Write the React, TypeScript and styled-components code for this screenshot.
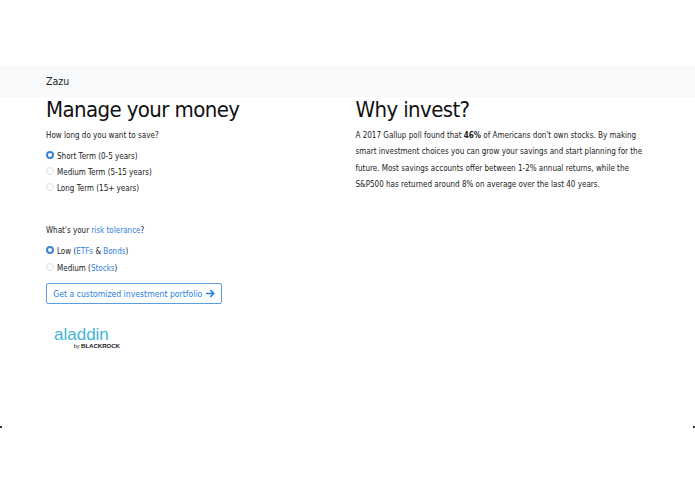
import React from "react";
import styled, { createGlobalStyle } from "styled-components";

const Global = createGlobalStyle`
  html, body { margin: 0; padding: 0; background: #fff; }
  body { font-family: "DejaVu Sans", sans-serif; font-stretch: condensed; color: #111; }
`;

const Page = styled.div`
  position: relative;
  width: 695px;
  height: 494px;
  padding-top: 66px;
  box-sizing: border-box;
  overflow: hidden;
`;

const Navbar = styled.header`
  height: 31px;
  box-sizing: border-box;
  padding: 0 0 2px 46px;
  background: #f8f9fa;
  display: flex;
  align-items: center;
  font-size: 10.5px;
  color: #222;
`;

const Columns = styled.main`
  display: grid;
  grid-template-columns: 309.5px 300px;
  padding-left: 46px;
`;

const Column = styled.section`
  display: flex;
  flex-direction: column;
  align-items: flex-start;
`;

const Heading = styled.h1`
  margin: -1px 0 0;
  font-size: 22px;
  line-height: 27px;
  font-weight: 400;
  letter-spacing: -0.6px;
  color: #111;
`;

const Question = styled.p<{ $top: number }>`
  margin: ${(p) => p.$top}px 0 0;
  font-size: 8px;
  line-height: 13px;
  color: #222;
`;

const Options = styled.div<{ $top: number }>`
  display: flex;
  flex-direction: column;
  gap: 3.4px;
  margin-top: ${(p) => p.$top}px;
`;

const Option = styled.label`
  display: flex;
  align-items: center;
  gap: 3.5px;
  height: 13px;
  font-size: 8px;
  color: #222;
`;

const Radio = styled.span<{ $on?: boolean }>`
  width: 8px;
  height: 8px;
  margin: -3px 0 0 -0.5px;
  border-radius: 50%;
  box-sizing: border-box;
  background: #fff;
  border: ${(p) => (p.$on ? "2.7px solid #3b82dc" : "1px solid #dcdfe2")};
`;

const Link = styled.span`
  color: #2a80e0;
`;

const CtaButton = styled.button`
  margin-top: 8.5px;
  width: 176px;
  height: 21px;
  padding: 0;
  display: flex;
  align-items: center;
  justify-content: center;
  gap: 2.5px;
  background: #fff;
  border: 1px solid #5a9ee0;
  border-radius: 2px;
  font: inherit;
  font-size: 8.65px;
  color: #2a80e0;
  white-space: nowrap;
`;

const Logo = styled.div`
  margin: 23px 0 0 8px;
  display: flex;
  flex-direction: column;
  align-items: flex-end;
  width: 66px;
`;

const LogoWord = styled.div`
  align-self: flex-start;
  font-family: "Liberation Sans", Arial, sans-serif;
  font-stretch: normal;
  font-size: 17px;
  line-height: 15px;
  color: #3fb4d8;
`;

const LogoBy = styled.div`
  font-family: "Liberation Sans", Arial, sans-serif;
  font-stretch: normal;
  font-size: 5.5px;
  line-height: 7px;
  color: #222;
  font-weight: 400;
`;

const LogoBrand = styled.span`
  font-size: 6.2px;
  font-weight: 700;
  letter-spacing: -0.1px;
`;

const Paragraph = styled.p`
  margin: 5px 0 0;
  width: 295px;
  font-size: 8px;
  line-height: 16.4px;
  color: #222;
`;

const Tick = styled.i<{ $side: "left" | "right" }>`
  position: absolute;
  top: 426px;
  ${(p) => p.$side}: 0;
  width: 2px;
  height: 2px;
  background: #333;
`;

export default function App() {
  return (
    <>
      <Global />
      <Page>
        <Navbar>Zazu</Navbar>
        <Columns>
          <Column>
            <Heading>Manage your money</Heading>
            <Question $top={6}>How long do you want to save?</Question>
            <Options $top={7.5}>
              <Option><Radio $on /><span>Short Term (0-5 years)</span></Option>
              <Option><Radio /><span>Medium Term (5-15 years)</span></Option>
              <Option><Radio /><span>Long Term (15+ years)</span></Option>
            </Options>
            <Question $top={29}>What's your <Link>risk tolerance</Link>?</Question>
            <Options $top={8}>
              <Option><Radio $on /><span>Low (<Link>ETFs</Link> &amp; <Link>Bonds</Link>)</span></Option>
              <Option><Radio /><span>Medium (<Link>Stocks</Link>)</span></Option>
            </Options>
            <CtaButton>
              <span>Get a customized investment portfolio</span>
              <svg width="10" height="9" viewBox="0 0 10 9" fill="none" stroke="#2a80e0" strokeWidth="1.6">
                <path d="M1 4.5h7.5M5.3 1l3.4 3.5L5.3 8" />
              </svg>
            </CtaButton>
            <Logo>
              <LogoWord>aladdin</LogoWord>
              <LogoBy>by <LogoBrand>BLACKROCK</LogoBrand></LogoBy>
            </Logo>
          </Column>
          <Column>
            <Heading>Why invest?</Heading>
            <Paragraph>
              A 2017 Gallup poll found that <b>46%</b> of Americans don't own stocks. By making smart investment choices you can grow your savings and start planning for the future. Most savings accounts offer between 1-2% annual returns, while the S&amp;P500 has returned around 8% on average over the last 40 years.
            </Paragraph>
          </Column>
        </Columns>
        <Tick $side="left" />
        <Tick $side="right" />
      </Page>
    </>
  );
}
